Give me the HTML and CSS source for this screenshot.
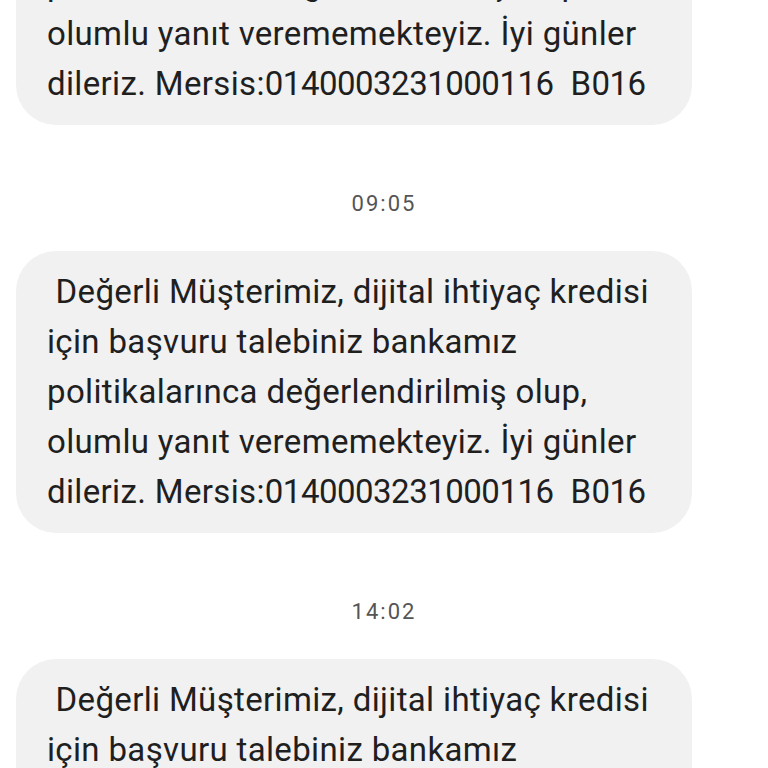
FILE: index.html
```html
<!DOCTYPE html>
<html lang="tr">
<head>
  <meta charset="UTF-8">
  <title>Mesajlar</title>
  <meta name="viewport" content="width=device-width, initial-scale=1.0">
  <link rel="stylesheet" href="styles.css">
</head>
<body>

  <div class="thread">

    <div class="bubble"> Değerli Müşterimiz, dijital ihtiyaç kredisi
için başvuru talebiniz bankamız
politikalarınca değerlendirilmiş olup,
olumlu yanıt verememekteyiz. İyi günler
dileriz. Mersis:<span class="num">0140003231000116</span>  B<span class="num">016</span></div>

    <div class="stamp">09:05</div>

    <div class="bubble"> Değerli Müşterimiz, dijital ihtiyaç kredisi
için başvuru talebiniz bankamız
politikalarınca değerlendirilmiş olup,
olumlu yanıt verememekteyiz. İyi günler
dileriz. Mersis:<span class="num">0140003231000116</span>  B<span class="num">016</span></div>

    <div class="stamp">14:02</div>

    <div class="bubble"> Değerli Müşterimiz, dijital ihtiyaç kredisi
için başvuru talebiniz bankamız
politikalarınca değerlendirilmiş olup,
olumlu yanıt verememekteyiz. İyi günler
dileriz. Mersis:<span class="num">0140003231000116</span>  B<span class="num">016</span></div>

  </div>

</body>
</html>
```

FILE: styles.css
```css
/* Reset */
* {
  margin: 0;
  padding: 0;
  box-sizing: border-box;
}

html, body {
  height: 100%;
  overflow: hidden;
}

body {
  background-color: #fff;
  color: #1f1f1f;
  font-family: Roboto, "Noto Sans", sans-serif;
}

.thread {
  display: flex;
  flex-direction: column;
  align-items: flex-start;
  margin-top: -157px;
  padding-left: 16px;
}

.bubble {
  width: 676px;
  background: #f1f1f1;
  border-radius: 40px;
  padding: 16px 20px 16px 31px;
  font-size: 33px;
  line-height: 50px;
  letter-spacing: 0.35px;
  white-space: pre-wrap;
}

/* digits run a bit tighter in the original font */
.num {
  letter-spacing: -0.5px;
}

.stamp {
  align-self: stretch;
  margin: 69px 16px 37px 0;
  text-align: center;
  font-size: 22px;
  line-height: 20px;
  letter-spacing: 2px;
  color: #555;
}
```
